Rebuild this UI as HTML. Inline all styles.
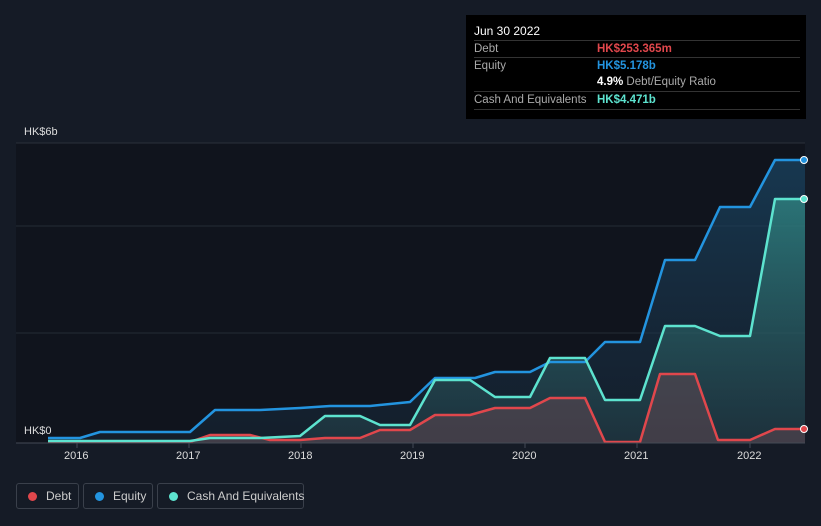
<!DOCTYPE html><html><head><style>
body{margin:0;width:821px;height:526px;background:#151b26;font-family:"Liberation Sans",sans-serif;overflow:hidden;position:relative}
.tt{position:absolute;left:466px;top:15px;width:340px;height:104px;background:#000;color:#fff;font-size:11.5px}
.row{position:absolute;left:8px;width:326px;border-top:1px solid #333;height:17px;line-height:17px;color:#aaa}
.v{position:absolute;left:123px;font-weight:bold}
.lg{position:absolute;top:483px;height:26px;border:1px solid #3a404b;border-radius:3px;color:#ccc;font-size:12px;line-height:24px;box-sizing:border-box;white-space:nowrap}
.dot{display:inline-block;width:9px;height:9px;border-radius:50%;margin:0 9px 0 11px;vertical-align:-1px}
.ax{position:absolute;color:#ddd;font-size:11px}
</style></head><body>
<svg width="821" height="526" style="position:absolute;left:0;top:0">
<defs>
<linearGradient id="ge" x1="0" y1="0" x2="0" y2="1"><stop offset="0" stop-color="#1a4766" stop-opacity=".7"/><stop offset="1" stop-color="#1a2d40" stop-opacity=".4"/></linearGradient>
<linearGradient id="gc" x1="0" y1="0" x2="0" y2="1"><stop offset="0" stop-color="#3aa79a" stop-opacity=".55"/><stop offset="1" stop-color="#2a4d55" stop-opacity=".4"/></linearGradient>
</defs>
<rect x="16" y="143" width="789" height="300" fill="#10141d"/>
<line x1="16" y1="143" x2="805" y2="143" stroke="#2a303a"/>
<line x1="16" y1="226" x2="805" y2="226" stroke="#252b35"/>
<line x1="16" y1="333" x2="805" y2="333" stroke="#252b35"/>
<polygon fill="url(#ge)" points="48,438 80,438 100,432 190,432 215,410 260,410 300,408 330,406 370,406 410,402 435,378 475,378 495,372 530,372 550,362 585,362 605,342 640,342 665,260 695,260 720,207 750,207 775,160 805,160 805,443 48,443"/>
<polygon fill="url(#gc)" points="48,441 190,441 210,438 260,438 300,436 325,416 360,416 380,425 410,425 435,380 470,380 495,397 530,397 550,358 585,358 605,400 640,400 665,326 695,326 720,336 750,336 775,199 805,199 805,443 48,443"/>
<polygon fill="#5a4650" opacity=".6" points="48,442 190,442 210,435 250,435 270,440 300,440 325,438 360,438 380,430 410,430 435,415 470,415 495,408 530,408 550,398 585,398 605,442 640,442 660,374 695,374 718,440 750,440 775,429 805,429 805,443 48,443"/>
<g fill="none" stroke-width="2.5" stroke-linejoin="round">
<polyline stroke="#e0474c" points="48,442 190,442 210,435 250,435 270,440 300,440 325,438 360,438 380,430 410,430 435,415 470,415 495,408 530,408 550,398 585,398 605,442 640,442 660,374 695,374 718,440 750,440 775,429 805,429"/>
<polyline stroke="#2394df" points="48,438 80,438 100,432 190,432 215,410 260,410 300,408 330,406 370,406 410,402 435,378 475,378 495,372 530,372 550,362 585,362 605,342 640,342 665,260 695,260 720,207 750,207 775,160 805,160"/>
<polyline stroke="#5de3cf" points="48,441 190,441 210,438 260,438 300,436 325,416 360,416 380,425 410,425 435,380 470,380 495,397 530,397 550,358 585,358 605,400 640,400 665,326 695,326 720,336 750,336 775,199 805,199"/>
</g>
<line x1="16" y1="443" x2="805" y2="443" stroke="#444a55"/>
<g stroke="#444a55"><line x1="77" y1="443" x2="77" y2="448"/><line x1="189" y1="443" x2="189" y2="448"/><line x1="301" y1="443" x2="301" y2="448"/><line x1="413" y1="443" x2="413" y2="448"/><line x1="525" y1="443" x2="525" y2="448"/><line x1="637" y1="443" x2="637" y2="448"/><line x1="750" y1="443" x2="750" y2="448"/></g>
<circle cx="804" cy="160" r="3.5" fill="#2394df" stroke="#fff"/>
<circle cx="804" cy="199" r="3.5" fill="#5de3cf" stroke="#fff"/>
<circle cx="804" cy="429" r="3.5" fill="#e0474c" stroke="#fff"/>
</svg>
<div class="ax" style="left:24px;top:126px">HK$6b</div>
<div class="ax" style="left:24px;top:425px">HK$0</div>
<div class="ax" style="left:64px;top:450px">2016</div>
<div class="ax" style="left:176px;top:450px">2017</div>
<div class="ax" style="left:288px;top:450px">2018</div>
<div class="ax" style="left:400px;top:450px">2019</div>
<div class="ax" style="left:512px;top:450px">2020</div>
<div class="ax" style="left:624px;top:450px">2021</div>
<div class="ax" style="left:737px;top:450px">2022</div>
<div class="tt">
<div style="position:absolute;left:8px;top:9px;font-size:12px">Jun 30 2022</div>
<div class="row" style="top:25px">Debt<span class="v" style="color:#e0474c">HK$253.365m</span></div>
<div class="row" style="top:42px">Equity<span class="v" style="color:#2394df">HK$5.178b</span></div>
<div class="row" style="top:59px;border-top:none"><span class="v" style="color:#fff">4.9% <span style="color:#aaa;font-weight:normal">Debt/Equity Ratio</span></span></div>
<div class="row" style="top:76px">Cash And Equivalents<span class="v" style="color:#5de3cf">HK$4.471b</span></div>
<div class="row" style="top:94px;height:0"></div>
</div>
<div class="lg" style="left:16px;width:63px"><span class="dot" style="background:#e0474c"></span>Debt</div>
<div class="lg" style="left:83px;width:70px"><span class="dot" style="background:#2394df"></span>Equity</div>
<div class="lg" style="left:157px;width:147px"><span class="dot" style="background:#5de3cf"></span>Cash And Equivalents</div>
</body></html>
